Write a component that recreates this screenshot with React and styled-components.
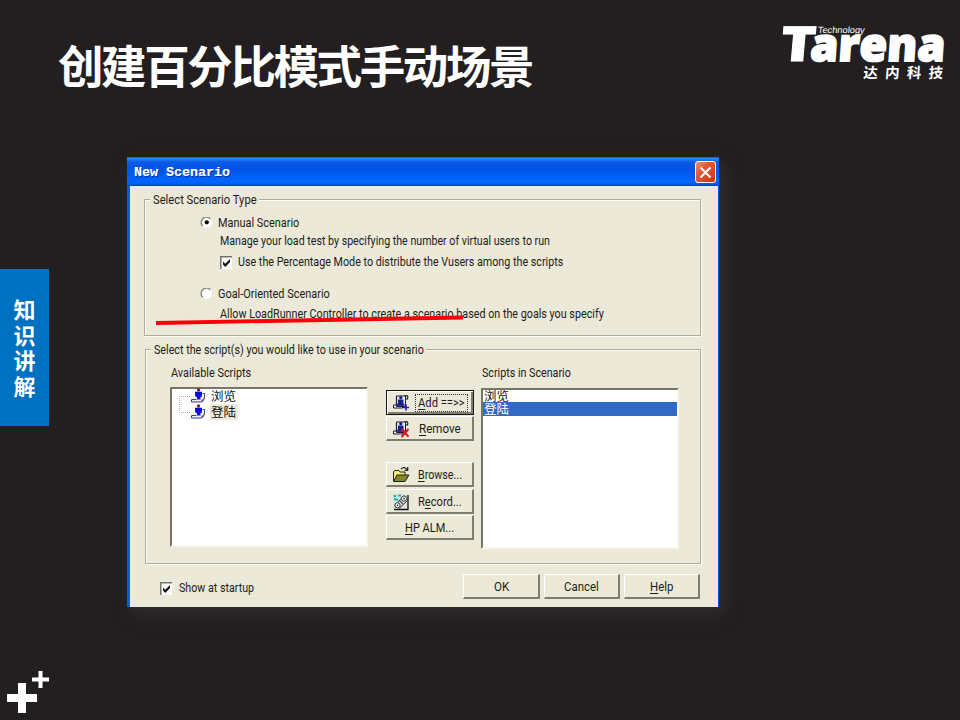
import React, { useLayoutEffect, useRef, useState } from "react";
import styled, { createGlobalStyle, css } from "styled-components";

const GlobalStyle = createGlobalStyle`
  * { box-sizing: border-box; }
  body { margin: 0; background: #231f20; }
`;

const cjk = `"Noto Sans CJK SC", sans-serif`;

const Slide = styled.div`
  width: 960px;
  height: 720px;
  display: grid;
  grid-template-rows: 157px 450px 113px;
  overflow: hidden;
  background: #231f20;
`;

const Header = styled.header`
  display: flex;
  justify-content: space-between;
  padding: 12px 0 0 58px;
`;

const SlideTitle = styled.h1`
  margin: 22px 0 0;
  height: 60px;
  font: 700 45.5px/60px ${cjk};
  letter-spacing: -2.4px;
  white-space: nowrap;
  color: #fff;
`;

const Logo = styled.svg`
  width: 190px;
  height: 82px;
  fill: #fff;
`;

const Main = styled.main`
  display: grid;
  grid-template-columns: 127px 592px;
`;

const SideTab = styled.aside`
  width: 49px;
  height: 157px;
  margin-top: 112px;
  padding: 27px 12px 0 13.5px;
  background: #0070c0;
  color: #fff;
  font: 700 22px/25.6px ${cjk};
  word-break: break-all;
`;

const Footer = styled.footer`
  padding: 60px 0 0 4px;
`;

const Dialog = styled.section`
  position: relative;
  height: 450px;
  display: grid;
  grid-template-rows: 29px 1fr;
  background: #ece9d8;
  box-shadow: 5px 6px 16px rgba(62, 60, 64, 0.55);
  color: #1c1c1a;
`;

const TitleBar = styled.div`
  display: flex;
  justify-content: space-between;
  align-items: center;
  padding: 2px 3px 0 7px;
  border-bottom: 1px solid #0047d6;
  background: linear-gradient(#0a50c8 0, #2f86fa 5%, #0a5ae6 18%, #0054e3 45%, #0062fb 75%, #0066ff 90%, #0050e0 100%);
`;

const Caption = styled.span`
  padding-top: 2px;
  font: 700 13.33px/18px "Liberation Mono", monospace;
  color: #fff;
  text-shadow: 1px 1px 0 #0a2f96, 0.3px 0 0 #fff;
  white-space: pre;
`;

const CloseButton = styled.button`
  display: flex;
  width: 21px;
  height: 22px;
  padding: 0;
  align-items: center;
  justify-content: center;
  border: 1px solid #fff;
  border-radius: 3px;
  background: linear-gradient(135deg, #ee9378 0%, #e2593a 35%, #d9421c 75%, #b93410 100%);
`;

const Client = styled.div`
  border-left: 3px solid #0a5af0;
  border-right: 1px solid #0a4fe8;
  padding: 13px 17px 0 14px;
`;

const Group = styled.div`
  height: ${(p) => p.$height}px;
  margin: 0 0 ${(p) => p.$gap || 0}px ${(p) => p.$indent || 0}px;
  border: 1px solid #aeac9f;
  box-shadow: inset 1px 1px 0 #fbfaf4, 1px 1px 0 #fbfaf4;
`;

const Legend = styled.div`
  width: fit-content;
  height: 16px;
  margin: -10px 0 0 5px;
  padding: 0 2px 0 3px;
  background: #ece9d8;
`;

const FitBox = styled.span`
  display: inline-block;
  flex: none;
  width: ${(p) => p.$width}px;
  height: 16px;
  font: 12.4px/16px Roboto, "Liberation Sans", sans-serif;
  text-align: left;
  white-space: nowrap;
`;

const FitInner = styled.span`
  display: inline-block;
  transform-origin: left center;
`;

const Key = styled.span`
  text-decoration: underline;
  text-underline-offset: 1.5px;
`;

/* Condenses a label horizontally to the given width. */
function Label({ width, children }) {
  const ref = useRef(null);
  const [scale, setScale] = useState(1);
  useLayoutEffect(() => {
    setScale(width / ref.current.offsetWidth);
  }, [width]);
  return (
    <FitBox $width={width}>
      <FitInner ref={ref} style={{ transform: `scaleX(${scale})` }}>{children}</FitInner>
    </FitBox>
  );
}

const OptionRow = styled.div`
  display: flex;
  align-items: center;
  gap: 6px;
  height: 16px;
  margin-left: ${(p) => p.$indent}px;
  margin-top: ${(p) => p.$top}px;
`;

const Box = styled.svg`
  flex: none;
  width: 12px;
  height: 13px;
`;

function CheckBox() {
  return (
    <Box viewBox="0 0 12 13">
      <path d="M0 0h12v13H0z" fill="#fff" />
      <path d="M0 13V0h12" fill="none" stroke="#77756a" strokeWidth="3" />
      <path d="M3 5.500v3L5.300 11 10 6V3L5.300 7.800z" fill="#111" />
    </Box>
  );
}

function Radio({ checked }) {
  return (
    <Box viewBox="0 0 12 13">
      <circle cx="6.500" cy="5.500" r="5.300" fill="#fff" />
      <path d="M2.700 9.300A5.300 5.300 0 0 1 10.300 1.700" fill="none" stroke="#86847a" strokeWidth="1.400" />
      {checked && <circle cx="6.800" cy="5.300" r="2.100" fill="#000" />}
    </Box>
  );
}

const Columns = styled.div`
  display: grid;
  grid-template-columns: 198px 113px 198px;
  margin: 7px 0 0 24px;
`;

const ListColumn = styled.div`
  display: flex;
  flex-direction: column;
  align-items: flex-start;
  gap: ${(p) => p.$gap}px;
`;

const ColumnTitle = styled.div`
  height: 16px;
  padding-left: 1px;
`;

const ButtonColumn = styled.div`
  display: flex;
  flex-direction: column;
  padding: 27px 7px 0 18px;
`;

const ListBox = styled.div`
  width: 198px;
  height: ${(p) => p.$height}px;
  border-top: 2px solid #77756a;
  border-left: 2px solid #77756a;
  border-right: 2px solid #f7f6ee;
  border-bottom: 2px solid #f7f6ee;
  background: #fff;
`;

const Tree = styled.div`
  display: grid;
  grid-template-columns: 18px 16px 1fr;
  grid-template-rows: 16px 16px;
  margin-top: -1px;
`;

const TreeLines = styled.svg`
  grid-row: 1 / 3;
  grid-column: 1;
  width: 18px;
  height: 32px;
`;

const TreeIcon = styled.svg`
  grid-column: 2;
  width: 16px;
  height: 16px;
`;

const TreeName = styled.span`
  grid-column: 3;
  width: 28px;
  height: 16px;
  margin-left: 4px;
  padding-left: 1px;
  font: 12.5px/16px ${cjk};
  color: #111;
  background: ${(p) => (p.$selected ? "#ece9d8" : "transparent")};
`;

const ListRow = styled.div`
  height: ${(p) => (p.$selected ? 14 : 12)}px;
  padding-left: 1px;
  font: 12.5px/${(p) => (p.$selected ? 14 : 11)}px ${cjk};
  color: ${(p) => (p.$selected ? "#fff" : "#111")};
  background: ${(p) => (p.$selected ? "#316ac5" : "transparent")};
`;

const Button = styled.button`
  display: flex;
  flex: none;
  align-items: center;
  justify-content: ${(p) => (p.$icon ? "flex-start" : "center")};
  gap: ${(p) => p.$gap || 0}px;
  width: ${(p) => p.$width || 88}px;
  height: 25px;
  margin: ${(p) => p.$top || 0}px 0 0;
  padding: 1px 0 0 ${(p) => (p.$icon ? 4 : 0)}px;
  border-style: solid;
  border-width: 1px 2px 2px 1px;
  border-color: #fff #7f7d70 #7f7d70 #fff;
  background: #ece9d8;
  color: inherit;
  ${(p) => p.$default && css`
    padding-top: 0;
    border: 1px solid #151515;
    box-shadow: inset 1px 1px 0 #fff, inset -2px -2px 0 #7f7d70;
  `}
`;

const FocusRing = styled.span`
  display: flex;
  align-items: center;
  height: 18px;
  padding: 0 2px;
  border: 1px dotted #333;
`;

const ButtonIcon = styled.svg`
  flex: none;
  width: 20px;
  height: 18px;
`;

const BottomRow = styled.div`
  display: flex;
  align-items: flex-start;
  gap: 4px;
  margin-top: 10px;
`;

const StartupOption = styled.div`
  display: flex;
  align-items: center;
  gap: 7px;
  width: 299px;
  margin: 6px 0 0 16px;
`;

const RedMark = styled.svg`
  position: absolute;
  left: 28px;
  top: 155px;
  width: 310px;
  height: 16px;
`;

function ScriptIcon() {
  return (
    <TreeIcon viewBox="0 0 16 16">
      <circle cx="8.500" cy="2" r="1.700" fill="#8a1545" />
      <path d="M5 3.800h7v4.500l-1.500 1V12H7V9.500L5 8z" fill="#0707f5" />
      <path d="M12.500 5.500h2v2.800c0 2.500-.8 4.200-2.700 5.500" fill="none" stroke="#4a4a70" strokeWidth="1.100" />
      <path d="M6.500 11.500H2c-.8.500-.8 2 0 2.500h9c1-.3 1.500-1.300 1.200-2.500" fill="#f0f0f8" stroke="#3535b0" strokeWidth="1.100" />
    </TreeIcon>
  );
}

function ScrollIcon({ remove }) {
  return (
    <ButtonIcon viewBox="0 0 20 18">
      <path d="M5.500 2h9v10.500h-9zM2.500 11h9v3h-9z" fill="#f5f5ee" stroke="#151b35" />
      <path d="M13.500 2c3-1 4 0 3 3h-2M5.500 2v9" fill="none" stroke="#151b35" strokeWidth="1.200" />
      <circle cx="9.800" cy="3.800" r="1.700" fill="#172188" />
      <path d="M7 5.500h5.500v4.500H7zM5.500 9.800h8v2h-8z" fill="#172188" />
      {remove
        ? <path d="M10.500 9.500l7 7m0-7.500l-7 8" stroke="#f00a16" strokeWidth="1.900" />
        : <path d="M15 10.500v6M12 13.500h6" stroke="#2020ad" strokeWidth="1.700" />}
    </ButtonIcon>
  );
}

function FolderIcon() {
  return (
    <ButtonIcon viewBox="0 0 20 18">
      <path d="M2.500 15V5.500l1.500-1h4l1 1.500h5v3" fill="#f3eb70" stroke="#262618" />
      <path d="M2.500 15.500L6 9h12l-4 6.500z" fill="#85832b" stroke="#202012" />
      <path d="M10 3.200c2-2.500 4.500-2 6 .300M16.700 1v3.300h-3.200" fill="none" stroke="#222" strokeWidth="1.200" />
    </ButtonIcon>
  );
}

function RecordIcon() {
  return (
    <ButtonIcon viewBox="0 0 20 18">
      <path d="M2 1h15v15H2z" fill="#dce2dc" />
      <path d="M17 2v14.500H3" fill="none" stroke="#111" strokeWidth="1.300" />
      <path d="M2.500 3h2.500M3 6l4 1M7 2.500h3" stroke="#0cbabf" strokeWidth="2" />
      <path d="M3.500 13L12 3.500M8 15.500l8.500-8" stroke="#333" />
      <circle cx="13" cy="5.500" r="2.600" fill="#fff" stroke="#333" />
      <circle cx="6.500" cy="12.300" r="2.600" fill="#fff" stroke="#333" />
      <circle cx="13" cy="5.500" r=".9" fill="#333" />
      <circle cx="6.500" cy="12.300" r=".9" fill="#333" />
      <path d="M9 8l3 3" stroke="#555" strokeWidth="1.500" />
    </ButtonIcon>
  );
}

function TarenaLogo() {
  return (
    <Logo viewBox="770 12 190 82">
      <g fontFamily="'Open Sans', sans-serif" fontWeight="800" stroke="#fff">
        <text transform="translate(779.500 61) skewX(-5)" fontSize="48.500" textLength="35" lengthAdjust="spacingAndGlyphs" strokeWidth="0.800">T</text>
        <text transform="translate(809.500 60.500) skewX(-4)" fontSize="46" textLength="135" lengthAdjust="spacingAndGlyphs" strokeWidth="1.800">arena</text>
      </g>
      <text transform="translate(817.500 32.500) skewX(-6)" fontFamily="'Liberation Sans', sans-serif" fontSize="9" textLength="47" lengthAdjust="spacingAndGlyphs">Technology</text>
      <text transform="translate(863 77.500) skewX(-4)" fontFamily="'Noto Sans CJK SC', sans-serif" fontSize="14.500" fontWeight="700" letterSpacing="7.300">达内科技</text>
    </Logo>
  );
}

export default function App() {
  return (
    <>
      <GlobalStyle />
      <Slide>
        <Header>
          <SlideTitle>创建百分比模式手动场景</SlideTitle>
          <TarenaLogo />
        </Header>
        <Main>
          <SideTab>知识讲解</SideTab>
          <Dialog>
            <TitleBar>
              <Caption>New Scenario</Caption>
              <CloseButton aria-label="Close">
                <svg width="13" height="13" viewBox="0 0 13 13">
                  <path d="M1.500 1.500l10 10M11.500 1.500l-10 10" stroke="#fff" strokeWidth="2.100" />
                </svg>
              </CloseButton>
            </TitleBar>
            <Client>
              <Group $height={137} $gap={13}>
                <Legend><Label width={104}>Select Scenario Type</Label></Legend>
                <OptionRow $indent={55} $top={9}><Radio checked /><Label width={81}>Manual Scenario</Label></OptionRow>
                <OptionRow $indent={75} $top={2}><Label width={330}>Manage your load test by specifying the number of virtual users to run</Label></OptionRow>
                <OptionRow $indent={75} $top={5}><CheckBox /><Label width={325}>Use the Percentage Mode to distribute the Vusers among the scripts</Label></OptionRow>
                <OptionRow $indent={55} $top={16}><Radio /><Label width={112}>Goal-Oriented Scenario</Label></OptionRow>
                <OptionRow $indent={75} $top={4}><Label width={384}>Allow LoadRunner Controller to create a scenario based on the goals you specify</Label></OptionRow>
              </Group>
              <Group $height={215} $indent={1}>
                <Legend><Label width={270}>Select the script(s) you would like to use in your scenario</Label></Legend>
                <Columns>
                  <ListColumn $gap={8}>
                    <ColumnTitle><Label width={80}>Available Scripts</Label></ColumnTitle>
                    <ListBox $height={160}>
                      <Tree>
                        <TreeLines viewBox="0 0 18 32">
                          <path d="M18 8.500H7.500v16H18" fill="none" stroke="#aaa" strokeDasharray="1 1" />
                        </TreeLines>
                        <ScriptIcon />
                        <TreeName>浏览</TreeName>
                        <ScriptIcon />
                        <TreeName $selected>登陆</TreeName>
                      </Tree>
                    </ListBox>
                  </ListColumn>
                  <ButtonColumn>
                    <Button $icon $default $gap={4}>
                      <ScrollIcon />
                      <FocusRing><Label width={47}><Key>A</Key>dd ==&gt;&gt;</Label></FocusRing>
                    </Button>
                    <Button $icon $gap={8} $top={1}><ScrollIcon remove /><Label width={42}><Key>R</Key>emove</Label></Button>
                    <Button $icon $gap={7} $top={21}><FolderIcon /><Label width={44}><Key>B</Key>rowse...</Label></Button>
                    <Button $icon $gap={7} $top={2}><RecordIcon /><Label width={44}>R<Key>e</Key>cord...</Label></Button>
                    <Button $top={1}><Label width={49}><Key>H</Key>P ALM...</Label></Button>
                  </ButtonColumn>
                  <ListColumn $gap={9}>
                    <ColumnTitle><Label width={89}>Scripts in Scenario</Label></ColumnTitle>
                    <ListBox $height={161}>
                      <ListRow>浏览</ListRow>
                      <ListRow $selected>登陆</ListRow>
                    </ListBox>
                  </ListColumn>
                </Columns>
              </Group>
              <BottomRow>
                <StartupOption><CheckBox /><Label width={75}>Show at startup</Label></StartupOption>
                <Button $width={77}><Label width={15}>OK</Label></Button>
                <Button $width={76}><Label width={35}>Cancel</Label></Button>
                <Button $width={76}><Label width={23}><Key>H</Key>elp</Label></Button>
              </BottomRow>
            </Client>
            <RedMark viewBox="155 312 310 16">
              <path d="M156 323L463 317.500" stroke="#fb0007" strokeWidth="3.800" />
            </RedMark>
          </Dialog>
        </Main>
        <Footer>
          <svg width="50" height="50" viewBox="4 667 50 50">
            <path d="M18 683h8v11h11v8H26v11h-8v-11H7v-8h11zM38.500 671h4v6.500H49v4h-6.500v6.500h-4v-6.500H32v-4h6.500z" fill="#fff" />
          </svg>
        </Footer>
      </Slide>
    </>
  );
}
